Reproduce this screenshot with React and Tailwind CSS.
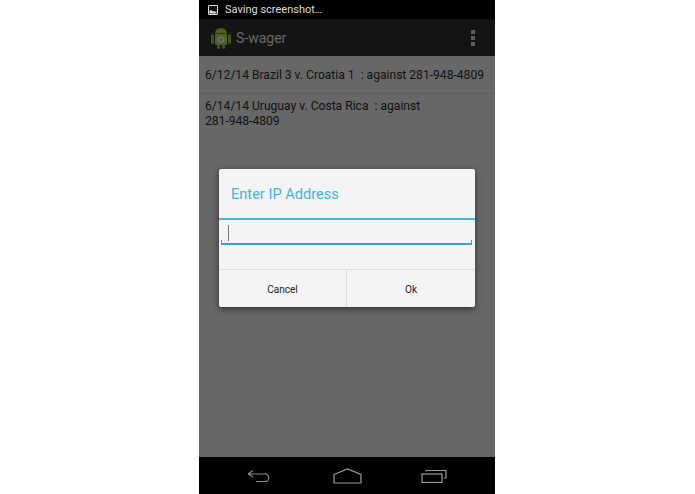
export default function App() {
  return (
    <div className="w-[695px] h-[494px] bg-white flex justify-start pl-[199px] font-['Roboto',sans-serif]">
      <div className="relative w-[296px] h-[494px] flex flex-col bg-[#676767]">
        <div className="h-[19px] bg-black flex items-center pl-[9px] gap-[7px] text-[#dcdcdc] text-[11px] shrink-0">
          <svg width="10" height="10" viewBox="0 0 10 10">
            <rect x="0.5" y="0.5" width="9" height="9" rx="0.5" fill="#111" stroke="#ddd" />
            <path d="M1.5 8.5V6L3 5l2 1.5 1-.5 2.500 1.200V8.500z" fill="#ddd" />
          </svg>
          <span className="pt-[1px]">Saving screenshot…</span>
        </div>
        <div className="h-[37px] bg-[#141414] flex items-center pl-[12px] pr-[20px] shrink-0">
          <svg width="20" height="22" viewBox="0 0 20 22">
            <rect x="0" y="7" width="3" height="10" rx="1.500" fill="#43521a" />
            <rect x="17" y="7" width="3" height="10" rx="1.500" fill="#43521a" />
            <path d="M4 6.500a6 5.500 0 0 1 12 0z" fill="#4d601e" />
            <rect x="4" y="7" width="12" height="11" rx="1" fill="#4d601e" />
            <rect x="6" y="17" width="3" height="5" rx="1.500" fill="#43521a" />
            <rect x="11" y="17" width="3" height="5" rx="1.500" fill="#43521a" />
            <circle cx="10" cy="12.500" r="3.500" fill="#6b6c64" />
            <circle cx="10" cy="12.500" r="1.500" fill="#4c4d47" />
          </svg>
          <span className="ml-[5px] pt-[2px] text-[14px] text-[#6a6a6a] flex-1">S-wager</span>
          <div className="flex flex-col gap-[2px]">
            <div className="w-[4px] h-[4px] bg-[#5c5c5c]" />
            <div className="w-[4px] h-[4px] bg-[#5c5c5c]" />
            <div className="w-[4px] h-[4px] bg-[#5c5c5c]" />
          </div>
        </div>
        <div className="flex-1 flex flex-col text-[#111] text-[12.1px] leading-[15px]">
          <div className="h-[38px] flex items-center px-[6px] pt-[2px] border-b border-[#5f5f5f] whitespace-nowrap">
            6/12/14 Brazil 3 v. Croatia 1&nbsp; : against 281-948-4809
          </div>
          <div className="pt-[5px] px-[6px]">
            6/14/14 Uruguay v. Costa Rica&nbsp; : against<br />281-948-4809
          </div>
        </div>
        <div className="h-[37px] bg-black flex items-center shrink-0 pl-[48px]">
          <svg width="28" height="16" viewBox="0 0 28 16" fill="none" stroke="#8c8c8c" strokeWidth="1.200">
            <path d="M1 8h18.500a4.200 4.200 0 0 1 0 7.500H9M1 8l5-3.500M1 8l5 3" transform="translate(0 -2)" />
          </svg>
          <svg className="ml-[58px]" width="29" height="16" viewBox="0 0 29 16" fill="none" stroke="#9a9a9a" strokeWidth="1.200">
            <path d="M1 6.500 14.500 1 28 6.500V15H1z" />
          </svg>
          <svg className="ml-[59px]" width="27" height="15" viewBox="0 0 27 15" fill="none" stroke="#9a9a9a" strokeWidth="1.200">
            <rect x="1" y="6" width="20" height="8.500" />
            <path d="M5 3.500V2.500h20v7.500h-2" />
          </svg>
        </div>
        <div className="absolute left-[20px] top-[169px] w-[256px] h-[138px] bg-[#f4f4f4] rounded-[2px] shadow-[0_2px_6px_rgba(0,0,0,0.55)] flex flex-col">
          <div className="h-[51px] flex items-center pl-[12px] pt-[3px] text-[#45b5da] text-[14.6px] border-b-2 border-[#45b5da] shrink-0">
            Enter IP Address
          </div>
          <div className="h-[49px] relative shrink-0">
            <div className="absolute left-[9px] top-[5px] w-[1px] h-[16px] bg-[#777]" />
            <div className="ml-[2px] mr-[3px] mt-[20px] h-[5px] border-x-[1px] border-b-[2px] border-x-[#3f9fc0] border-b-[#3f9fc0]" />
          </div>
          <div className="flex-1 flex border-t border-[#dedede] text-[10px] text-[#222]">
            <div className="w-[128px] pt-[1px] flex items-center justify-center border-r border-[#dedede]">Cancel</div>
            <div className="flex-1 pt-[1px] flex items-center justify-center">Ok</div>
          </div>
        </div>
      </div>
    </div>
  );
}
